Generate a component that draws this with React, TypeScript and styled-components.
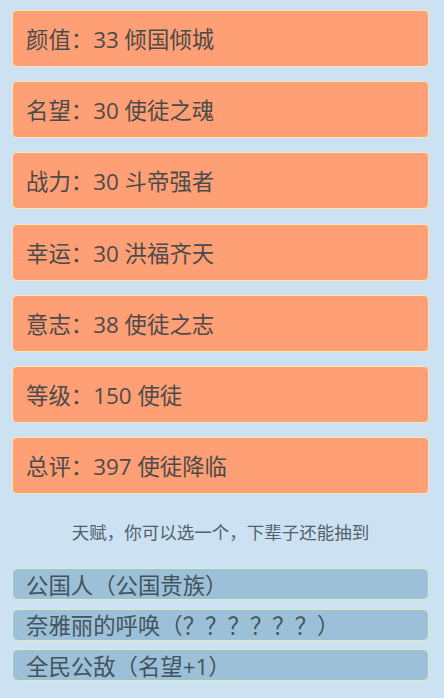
import { createGlobalStyle, styled } from "styled-components";

const GlobalStyle = createGlobalStyle`
  html, body {
    margin: 0;
    padding: 0;
    background: #cce2f2;
  }
  body {
    font-family: "Open Sans", "Noto Sans CJK SC", sans-serif;
  }
`;

const Page = styled.div`
  box-sizing: border-box;
  width: 444px;
  min-height: 698px;
  padding: 10px 15px 0 12px;
  background: #cce2f2;
`;

const Summary = styled.ul`
  list-style: none;
  margin: 0;
  padding: 0;
  display: flex;
  flex-direction: column;
  gap: 14.2px;
`;

const Stat = styled.li`
  box-sizing: border-box;
  height: 57px;
  display: flex;
  align-items: center;
  padding: 0 13px;
  background: #ff9f75;
  border: 1px solid #f8e7b0;
  border-radius: 5px;
  color: #4b4b4b;
  font-size: 22.4px;
`;

const Hint = styled.p`
  margin: 0;
  height: 74px;
  display: flex;
  align-items: center;
  justify-content: center;
  color: #52616b;
  font-size: 17.5px;
  font-family: "Noto Sans CJK SC", sans-serif;
`;

const Talents = styled.ul`
  list-style: none;
  margin: 0;
  padding: 0;
  display: flex;
  flex-direction: column;
  gap: 8.5px;
`;

const Talent = styled.li`
  box-sizing: border-box;
  height: 32px;
  display: flex;
  align-items: center;
  padding: 0 13px;
  background: #9cc0d8;
  border: 1px solid #d8efc4;
  border-radius: 6px;
  color: #44535d;
  font-size: 22.4px;
`;

const stats = [
  { label: "颜值", value: 33, grade: "倾国倾城" },
  { label: "名望", value: 30, grade: "使徒之魂" },
  { label: "战力", value: 30, grade: "斗帝强者" },
  { label: "幸运", value: 30, grade: "洪福齐天" },
  { label: "意志", value: 38, grade: "使徒之志" },
  { label: "等级", value: 150, grade: "使徒" },
  { label: "总评", value: 397, grade: "使徒降临" },
];

const talents = [
  "公国人（公国贵族）",
  "奈雅丽的呼唤（？？？？？？）",
  "全民公敌（名望+1）",
];

const App = () => {
  return (
    <Page>
      <GlobalStyle />
      <Summary>
        {stats.map((s) => (
          <Stat key={s.label}>
            {s.label}：{s.value} {s.grade}
          </Stat>
        ))}
      </Summary>
      <Hint>天赋，你可以选一个，下辈子还能抽到</Hint>
      <Talents>
        {talents.map((t) => (
          <Talent key={t}>{t}</Talent>
        ))}
      </Talents>
    </Page>
  );
};

export default App;
